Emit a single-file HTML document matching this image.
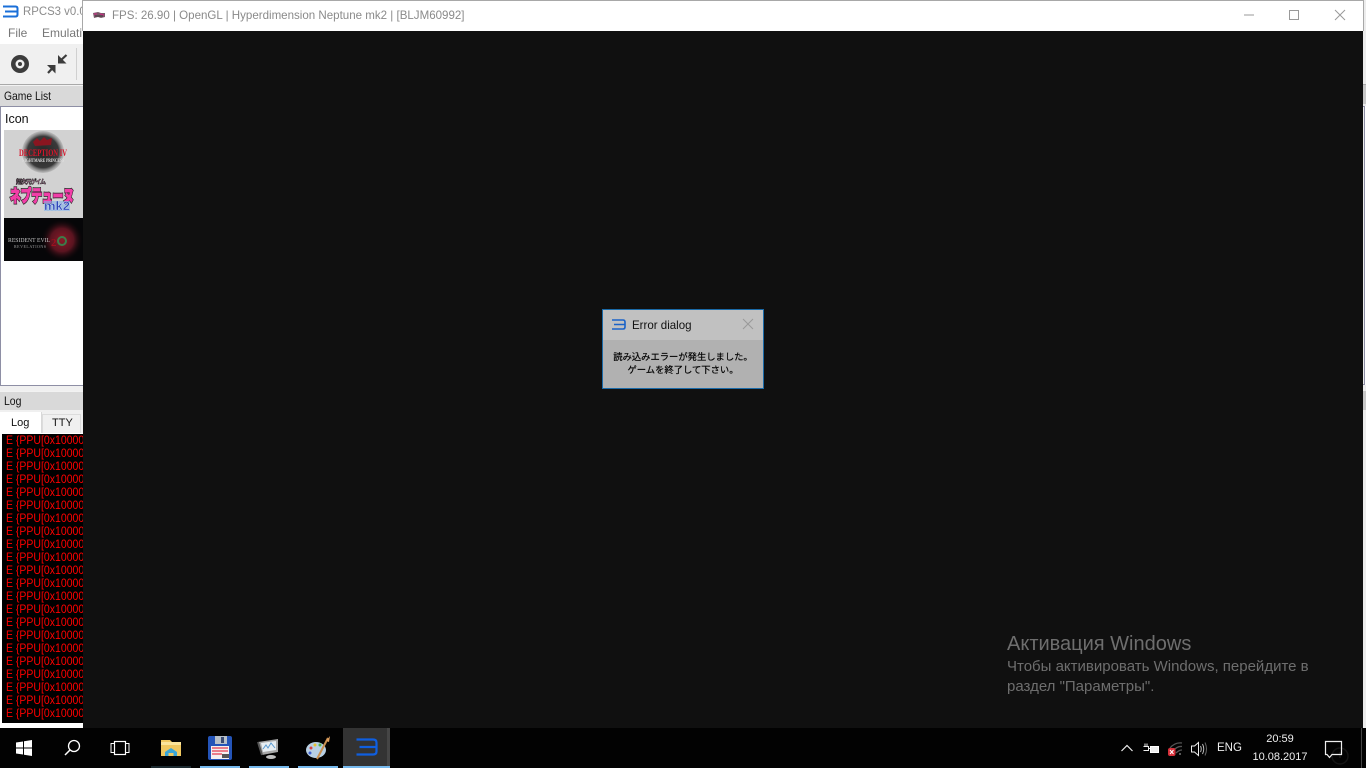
<!DOCTYPE html>
<html><head><meta charset="utf-8"><title>RPCS3</title>
<style>
*{box-sizing:border-box}
html,body{margin:0;padding:0;width:1366px;height:768px;overflow:hidden;background:#f0f0f0;font-family:"Liberation Sans","Noto Sans CJK JP",sans-serif}
.a{position:absolute;white-space:nowrap;transform-origin:0 50%}
svg{position:absolute;overflow:visible}
#log div{position:absolute;left:6px;font-size:12px;line-height:13px;color:#f00;white-space:nowrap;transform:scaleX(.875);transform-origin:0 50%}
</style></head><body>
<!-- main window behind -->
<div class="a" style="left:0;top:0;width:83px;height:22px;background:#fff"></div>
<svg style="left:3px;top:5px" width="16" height="13" viewBox="0 0 16 13"><path d="M0 1.500H12.500Q14.500 1.500 14.500 3.500V9.500Q14.500 11.500 12.500 11.500H0M2 6.500H14" fill="none" stroke="#1a6fd8" stroke-width="2"/></svg>
<div class="a" style="left:23px;top:4px;font-size:12px;line-height:15px;color:#8c8c8c;transform:scaleX(.95)">RPCS3 v0.0.</div>
<div class="a" style="left:0;top:22px;width:83px;height:22px;background:#fff"></div>
<div class="a" style="left:8px;top:26px;font-size:12px;line-height:15px;color:#777">File</div>
<div class="a" style="left:42px;top:26px;font-size:12px;line-height:15px;color:#777">Emulati</div>
<div class="a" style="left:0;top:44px;width:83px;height:40px;background:#f0f0f0"></div>
<svg style="left:0;top:44px" width="83" height="40" viewBox="0 0 83 40">
<circle cx="20" cy="20" r="9" fill="#3c3c3c"/>
<circle cx="20" cy="20" r="4.500" fill="#f0f0f0"/>
<circle cx="20" cy="20" r="2" fill="#3c3c3c"/>
<path d="M58 11V19.500H66.500Z" fill="#3c3c3c"/>
<path d="M60 17L66.500 11" stroke="#3c3c3c" stroke-width="2.200" fill="none"/>
<path d="M47 21H55.500V29.500Z" fill="#3c3c3c"/>
<path d="M53 23.500L48 29" stroke="#3c3c3c" stroke-width="2.200" fill="none"/>
<path d="M76.500 4V36" stroke="#d0d0d0"/>
</svg>
<div class="a" style="left:0;top:84px;width:83px;height:1px;background:#a9a9a9"></div>
<div class="a" style="left:0;top:85px;width:83px;height:21px;background:#d9d9d9;border-top:1px solid #f2f2f2"></div>
<div class="a" style="left:4px;top:89px;font-size:12px;line-height:14px;color:#111;transform:scaleX(.86)">Game List</div>
<div class="a" style="left:0;top:106px;width:83px;height:280px;background:#fff;border:1px solid #8e8fa5;border-right:0"></div>
<div class="a" style="left:5px;top:112px;font-size:12.500px;line-height:15px;color:#111">Icon</div>
<!-- game icons -->
<div class="a" style="left:4px;top:130px;width:79px;height:88px;background:#d2d2d2"></div>
<svg style="left:4px;top:130px" width="79" height="131" viewBox="0 0 79 131">
<defs>
<radialGradient id="g1"><stop offset="0" stop-color="#262626"/><stop offset=".75" stop-color="#3a3a3a"/><stop offset="1" stop-color="#8a8a8a" stop-opacity=".3"/></radialGradient>
<radialGradient id="g2"><stop offset="0" stop-color="#8a1a28"/><stop offset=".55" stop-color="#5a1420"/><stop offset="1" stop-color="#0c0608" stop-opacity="0"/></radialGradient>
</defs>
<circle cx="39" cy="22" r="21" fill="url(#g1)"/>
<path d="M29 12l4-4 3 3 4-4 3 3 5-2-1 7-16 1z" fill="#8a1520"/>
<text x="39" y="26" font-family="Liberation Serif" font-size="9" font-weight="700" fill="#d8142a" text-anchor="middle" textLength="48" lengthAdjust="spacingAndGlyphs">DECEPTION IV</text>
<text x="39" y="32" font-family="Liberation Serif" font-size="5" font-weight="700" fill="#e0e0e0" text-anchor="middle" textLength="42" lengthAdjust="spacingAndGlyphs">NIGHTMARE PRINCESS</text>
<text x="27" y="54" font-family="Noto Sans CJK JP" font-size="6" font-weight="700" fill="#f6a6d8" stroke="#222" stroke-width=".5" text-anchor="middle" textLength="30">超次元ゲイム</text>
<text x="38" y="72" font-family="Noto Sans CJK JP" font-size="17" font-weight="900" fill="#222" stroke="#222" stroke-width="2.500" text-anchor="middle" textLength="64" lengthAdjust="spacingAndGlyphs">ネプテューヌ</text>
<text x="38" y="72" font-family="Noto Sans CJK JP" font-size="17" font-weight="900" fill="#f23ea8" stroke="#f23ea8" stroke-width="1" text-anchor="middle" textLength="64" lengthAdjust="spacingAndGlyphs">ネプテューヌ</text>
<rect x="40" y="71" width="26" height="10" fill="#7fb0e8" opacity=".6"/>
<text x="53" y="80" font-size="12" font-weight="700" fill="#2f48b8" stroke="#dfe8ff" stroke-width=".3" text-anchor="middle" textLength="26" lengthAdjust="spacingAndGlyphs">mk2</text>
<rect y="88" width="79" height="43" fill="#060608"/>
<circle cx="58" cy="110" r="21" fill="url(#g2)"/>
<circle cx="58" cy="111" r="4" fill="none" stroke="#3c7d4a" stroke-width="2"/>
<text x="4" y="112" font-family="Liberation Serif" font-size="6" fill="#c4c4c4" textLength="42" lengthAdjust="spacingAndGlyphs">RESIDENT EVIL</text>
<text x="10" y="118" font-family="Liberation Serif" font-size="4" fill="#a0a0a0" textLength="32">REVELATIONS</text>
<text x="47" y="116" font-family="Liberation Serif" font-size="11" font-weight="700" fill="#a01020">2</text>
</svg>
<!-- log dock -->
<div class="a" style="left:0;top:386px;width:83px;height:5px;background:#f0f0f0"></div>
<div class="a" style="left:0;top:391px;width:83px;height:19px;background:#d9d9d9;border-top:1px solid #f2f2f2"></div>
<div class="a" style="left:4px;top:394px;font-size:12px;line-height:14px;color:#111;transform:scaleX(.87)">Log</div>
<div class="a" style="left:0;top:410px;width:83px;height:318px;background:#f0f0f0"></div>
<div class="a" style="left:0;top:412px;width:42px;height:22px;background:#fff;border-right:1px solid #d8d8d8"></div>
<div class="a" style="left:42px;top:414px;width:39px;height:20px;background:#f0f0f0;border:1px solid #dcdcdc;border-bottom:0"></div>
<div class="a" style="left:11px;top:416px;font-size:11px;line-height:14px;color:#111">Log</div>
<div class="a" style="left:52px;top:416px;font-size:11px;line-height:14px;color:#111">TTY</div>
<div class="a" style="left:0;top:433px;width:83px;height:295px;background:#fff"></div>
<div class="a" style="left:2px;top:434px;width:81px;height:289px;background:#000;overflow:hidden"></div>
<div id="log" class="a" style="left:0;top:0;width:83px;height:728px;overflow:hidden">
<div style="top:434px">E {PPU[0x10000</div><div style="top:447px">E {PPU[0x10000</div><div style="top:460px">E {PPU[0x10000</div><div style="top:473px">E {PPU[0x10000</div><div style="top:486px">E {PPU[0x10000</div><div style="top:499px">E {PPU[0x10000</div><div style="top:512px">E {PPU[0x10000</div><div style="top:525px">E {PPU[0x10000</div><div style="top:538px">E {PPU[0x10000</div><div style="top:551px">E {PPU[0x10000</div><div style="top:564px">E {PPU[0x10000</div><div style="top:577px">E {PPU[0x10000</div><div style="top:590px">E {PPU[0x10000</div><div style="top:603px">E {PPU[0x10000</div><div style="top:616px">E {PPU[0x10000</div><div style="top:629px">E {PPU[0x10000</div><div style="top:642px">E {PPU[0x10000</div><div style="top:655px">E {PPU[0x10000</div><div style="top:668px">E {PPU[0x10000</div><div style="top:681px">E {PPU[0x10000</div><div style="top:694px">E {PPU[0x10000</div><div style="top:707px">E {PPU[0x10000</div>
</div>
<!-- right sliver of main window -->
<div class="a" style="left:1363px;top:0;width:3px;height:728px;background:#ececec"></div>
<div class="a" style="left:1363px;top:84px;width:3px;height:1px;background:#a9a9a9"></div>
<div class="a" style="left:1363px;top:85px;width:3px;height:19px;background:#c8c8c8"></div>
<div class="a" style="left:1364px;top:106px;width:2px;height:279px;background:#fff;border-left:1px solid #8e8fa5"></div>
<div class="a" style="left:1363px;top:106px;width:2px;height:1px;background:#8e8fa5"></div>
<div class="a" style="left:1363px;top:384px;width:2px;height:1px;background:#8e8fa5"></div>
<div class="a" style="left:1363px;top:391px;width:3px;height:19px;background:#c8c8c8"></div>
<!-- game window -->
<div class="a" style="left:83px;top:0;width:1280px;height:728px;background:#101010"></div>
<div class="a" style="left:82px;top:0;width:1282px;height:31px;background:#fff;border:1px solid #a8a8a8;border-bottom:0"></div>
<svg style="left:92px;top:11px" width="14" height="8" viewBox="0 0 14 8"><path d="M1 2L6 1L9 2H13V6L9 7L6 6L2 7Z" fill="#7a5a6a"/><path d="M2 3H5M8 3L12 4" stroke="#c03080" stroke-width="1.200"/><path d="M3 5H11" stroke="#3a3a3a"/></svg>
<div class="a" style="left:112px;top:8px;font-size:12px;line-height:15px;color:#8a8a8a;transform:scaleX(.962)">FPS: 26.90 | OpenGL | Hyperdimension Neptune mk2 | [BLJM60992]</div>
<svg style="left:1240px;top:5px" width="120" height="20" viewBox="0 0 120 20">
<path d="M4 10H14" stroke="#999"/>
<path d="M49.500 5.500H58.500V14.500H49.500Z" fill="none" stroke="#999"/>
<path d="M95 5L105 15M105 5L95 15" stroke="#999" fill="none"/>
</svg>
<!-- dialog -->
<div class="a" style="left:602px;top:309px;width:162px;height:80px;background:#b1b1b1;border:1px solid #1a6aa8"></div>
<div class="a" style="left:603px;top:310px;width:160px;height:30px;background:#c1c1c1"></div>
<svg style="left:611px;top:319px" width="16" height="11" viewBox="0 0 16 11"><path d="M1 1H12Q14 1 14 3V8Q14 10 12 10H1M3 5.500H14" fill="none" stroke="#1a62c8" stroke-width="1.600"/></svg>
<div class="a" style="left:632px;top:318px;font-size:12px;line-height:15px;color:#111;transform:scaleX(.96)">Error dialog</div>
<svg style="left:742px;top:318px" width="12" height="12" viewBox="0 0 12 12"><path d="M1 1L11 11M11 1L1 11" stroke="#999" fill="none"/></svg>
<div class="a" style="left:603px;top:351px;width:160px;text-align:center;font-size:9.300px;line-height:13px;color:#000;-webkit-text-stroke:.2px #000">読み込みエラーが発生しました。<br>ゲームを終了して下さい。</div>
<!-- watermark -->
<div class="a" style="left:1007px;top:633px;font-size:20px;line-height:23px;color:#6e6e6e">Активация Windows</div>
<div class="a" style="left:1007px;top:657px;font-size:15px;line-height:20px;color:#6e6e6e">Чтобы активировать Windows, перейдите в<br>раздел "Параметры".</div>
<!-- taskbar -->
<div class="a" style="left:0;top:728px;width:1366px;height:40px;background:#020202"></div>
<div class="a" style="left:343px;top:728px;width:47px;height:40px;background:#333"></div>
<div class="a" style="left:387px;top:728px;width:3px;height:40px;background:#454545"></div>
<div class="a" style="left:1361px;top:728px;width:1px;height:40px;background:#444"></div>
<div class="a" style="left:151px;top:766px;width:40px;height:2px;background:#1c2a30"></div>
<div class="a" style="left:200px;top:766px;width:40px;height:2px;background:#76b9ed"></div>
<div class="a" style="left:249px;top:766px;width:40px;height:2px;background:#76b9ed"></div>
<div class="a" style="left:298px;top:766px;width:40px;height:2px;background:#76b9ed"></div>
<div class="a" style="left:343px;top:766px;width:47px;height:2px;background:#76b9ed"></div>
<svg style="left:0;top:728px" width="400" height="40" viewBox="0 0 400 40">
<path d="M16 14.500L23 13.500V19.500H16ZM24 13.300L32 12V19.500H24ZM16 20.500H23V26.500L16 25.500ZM24 20.500H32V28L24 26.700Z" fill="#fff"/>
<circle cx="74" cy="18" r="5.500" fill="none" stroke="#fff" stroke-width="1.300"/><path d="M70 22L65 27" stroke="#fff" stroke-width="1.500"/>
<path d="M114.500 15.500H111V24.500H114.500M125.500 15.500H129V24.500H125.500" fill="none" stroke="#fff" stroke-width="1"/><rect x="114.500" y="13.500" width="11" height="13" fill="none" stroke="#fff" stroke-width="1.200"/>
<path d="M161 12H170L172 14H181V28H161Z" fill="#f0c860"/><path d="M161 14H181V17H161Z" fill="#fbe49a"/><path d="M165 28V24L171 20L177 24V28H173.500V25H168.500V28Z" fill="#3aa6d8"/>
<rect x="208" y="8" width="24" height="24" rx="2" fill="#2454b8"/><rect x="215" y="8" width="12" height="8" fill="#b8c0c8"/><rect x="221" y="9" width="3" height="6" fill="#3a4a70"/><rect x="211" y="18" width="18" height="13" fill="#f4f0f0"/><path d="M212 20H228M212 23H228M212 26H222" stroke="#e85868" stroke-width="1.500"/><rect x="222" y="26" width="7" height="4" fill="#555"/>
<path d="M258 14L278 11V24L262 27Z" fill="#a8a8a8"/><path d="M261 15L276 13V22L263 24Z" fill="#e8eef2"/><path d="M263 21L266 17L268 20L271 15L275 20" stroke="#5a9ad0" fill="none"/><path d="M258 14L262 27" stroke="#555" stroke-width="2"/><ellipse cx="271" cy="29" rx="5" ry="2" fill="#c0c0c0"/>
<ellipse cx="316" cy="22" rx="10" ry="8" fill="#b8d0e4"/><circle cx="311" cy="20" r="1.500" fill="#d84040"/><circle cx="315" cy="17" r="1.500" fill="#e8c030"/><circle cx="320" cy="17" r="1.500" fill="#50b050"/><circle cx="310" cy="25" r="1.500" fill="#4060d0"/>
<path d="M317 31L328 10" stroke="#c89050" stroke-width="2"/><path d="M326 13L330 8L329 14Z" fill="#e0a060"/>
<path d="M356.500 11.500H373Q376.500 11.500 376.500 14.500V23.500Q376.500 26.500 373 26.500H356.500M359.500 19H376" fill="none" stroke="#0f5fe0" stroke-width="2.200"/>
</svg>
<svg style="left:1110px;top:728px" width="240" height="40" viewBox="0 0 240 40">
<circle cx="230" cy="28" r="8" fill="none" stroke="#141414" stroke-width="1.500"/><path d="M230 24V30" stroke="#181818" stroke-width="1.500"/>
<path d="M11.500 23L17 17.500L22.500 23" fill="none" stroke="#eee" stroke-width="1.200"/>
<path d="M33.500 18.500H38.500V22.500H33.500M35 18.500V15.500M37 18.500V15.500M38.500 20.500H40" fill="none" stroke="#eee"/><rect x="40.500" y="18.500" width="8" height="6" fill="#eee" stroke="#fff"/>
<path d="M60 20Q65 14 72 15M63 23Q67 18 72 18.500M66 25Q69 22 72 22" fill="none" stroke="#555" stroke-width="1.300"/>
<circle cx="70" cy="26" r="1" fill="#777"/><rect x="58" y="20" width="7.500" height="8" rx="2" fill="#d8303a"/><path d="M60 22L63.500 26M63.500 22L60 26" stroke="#fff"/>
<path d="M81.500 18V24H84.500L88.500 27.500V14.500L84.500 18Z" fill="none" stroke="#eee"/><path d="M90.500 18Q92 21 90.500 24M92.500 16Q95 21 92.500 26" fill="none" stroke="#bbb"/><path d="M95 14.500Q98 21 95 27.500" fill="none" stroke="#666"/>
<path d="M215.500 13.500H231.500V26.500H222L219.500 29.500L217 26.500H215.500Z" fill="none" stroke="#eee" stroke-width="1.200"/>
</svg>
<div class="a" style="left:1217px;top:741px;font-size:11.500px;line-height:14px;color:#eee">ENG</div>
<div class="a" style="left:1246px;top:730px;width:68px;text-align:center;font-size:11px;line-height:18px;color:#eee">20:59<br>10.08.2017</div>
</body></html>
